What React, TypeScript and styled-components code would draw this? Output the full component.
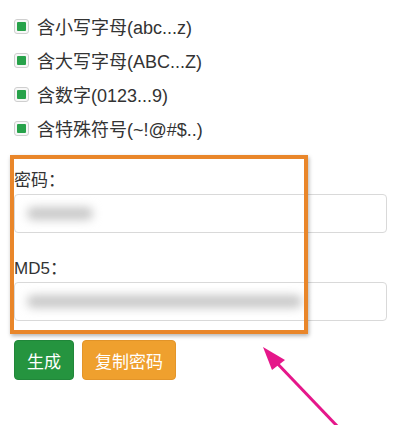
import * as React from 'react'
import styled, { createGlobalStyle } from 'styled-components'

const GlobalStyle = createGlobalStyle`
  html, body {
    margin: 0;
    padding: 0;
    background: #ffffff;
  }
  body {
    font-family: 'Liberation Sans', 'Noto Sans CJK SC', sans-serif;
    color: #333333;
  }
`

const Page = styled.div`
  position: relative;
  width: 400px;
  height: 425px;
  overflow: hidden;
  padding: 9px 13px 0 14px;
  box-sizing: border-box;
`

const OptionList = styled.ul`
  list-style: none;
  margin: 0;
  padding: 0;
`

const Option = styled.li`
  display: flex;
  align-items: center;
  height: 34px;
  gap: 8px;
  font-size: 18px;
  color: #333;
`

const Check = styled.span`
  width: 15px;
  height: 15px;
  box-sizing: border-box;
  border: 1px solid #cfcfcf;
  border-radius: 3px;
  background: #f7f7f7;
  display: flex;
  align-items: center;
  justify-content: center;
  flex-shrink: 0;

  &::after {
    content: '';
    width: 9px;
    height: 9px;
    border-radius: 1px;
    background: #27a24a;
  }
`

const Form = styled.div`
  display: flex;
  flex-direction: column;
  gap: 26px;
  padding-top: 26px;
`

const Field = styled.div`
  display: flex;
  flex-direction: column;
  gap: 3px;
`

const Label = styled.label`
  font-size: 17px;
  line-height: 20px;
  color: #333;
`

const Input = styled.div`
  height: 39px;
  box-sizing: border-box;
  border: 1px solid #d9d9d9;
  border-radius: 4px;
  background: #fff;
  display: flex;
  align-items: center;
  padding-left: 12px;
`

const Blurred = styled.span<{ $w: number }>`
  display: block;
  width: ${({ $w }) => $w}px;
  height: 13px;
  border-radius: 6px;
  background: #c9c9c9;
  filter: blur(5px);
`

const Actions = styled.div`
  display: flex;
  gap: 8px;
  margin-top: 19px;
`

const Button = styled.button<{ $tone: 'green' | 'orange' }>`
  height: 40px;
  padding: 0 12px;
  border-radius: 4px;
  font-family: 'Liberation Sans', 'Noto Sans CJK SC', sans-serif;
  font-size: 17px;
  color: #fff;
  background: ${({ $tone }) => ($tone === 'green' ? '#25943f' : '#efa02e')};
  border: 1px solid ${({ $tone }) => ($tone === 'green' ? '#21873a' : '#e3952a')};
`

const Highlight = styled.div`
  position: absolute;
  left: 10px;
  top: 155px;
  width: 298px;
  height: 179px;
  box-sizing: border-box;
  border: 4px solid #e9862a;
  box-shadow: 1px 2px 4px rgba(0, 0, 0, 0.3);
  pointer-events: none;
`

const Arrow = styled.svg`
  position: absolute;
  left: 0;
  top: 0;
  pointer-events: none;
`

export default function App() {
  return (
    <>
      <GlobalStyle />
      <Page>
        <OptionList>
          <Option>
            <Check />
            含小写字母(abc...z)
          </Option>
          <Option>
            <Check />
            含大写字母(ABC...Z)
          </Option>
          <Option>
            <Check />
            含数字(0123...9)
          </Option>
          <Option>
            <Check />
            含特殊符号(~!@#$..)
          </Option>
        </OptionList>
        <Form>
          <Field>
            <Label>密码：</Label>
            <Input>
              <Blurred $w={66} />
            </Input>
          </Field>
          <Field>
            <Label>MD5：</Label>
            <Input>
              <Blurred $w={275} />
            </Input>
          </Field>
        </Form>
        <Actions>
          <Button $tone='green'>生成</Button>
          <Button $tone='orange'>复制密码</Button>
        </Actions>
        <Highlight />
        <Arrow width='400' height='425' viewBox='0 0 400 425'>
          <line x1='339' y1='428' x2='274' y2='360' stroke='#e5178a' strokeWidth='3' />
          <polygon points='263,347 285,360 272,370' fill='#e5178a' />
        </Arrow>
      </Page>
    </>
  )
}
